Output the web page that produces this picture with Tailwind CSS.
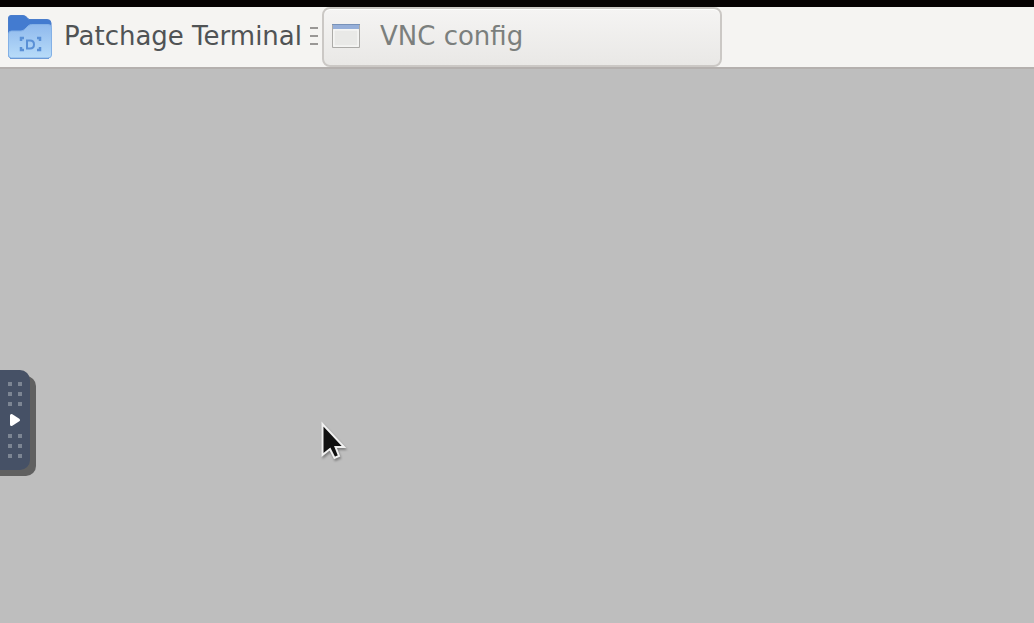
<!DOCTYPE html>
<html lang="en">
<head>
<meta charset="utf-8">
<meta name="viewport" content="width=device-width, initial-scale=1">
<title>VNC desktop</title>
<script src="https://cdn.jsdelivr.net/npm/@tailwindcss/browser@4"></script>
</head>
<body class="relative flex h-screen flex-col overflow-hidden bg-[#bebebe] font-['DejaVu_Sans',sans-serif] text-[26px] leading-8">
<header class="flex h-[69px] shrink-0 items-stretch border-t-[7px] border-b-2 border-t-[#060303] border-b-[#b4b0ae] bg-[#f5f4f2]">
  <button type="button" class="flex items-center pl-1.5 pb-0.5 text-[#505355]">
    <svg class="mr-3 h-12 w-[46px] shrink-0" viewBox="0 0 46 48" aria-hidden="true">
      <defs><linearGradient id="folder" x1="0" y1="0" x2="0" y2="1"><stop offset="0" stop-color="#8fb9ed"/><stop offset="1" stop-color="#b8dcf9"/></linearGradient></defs>
      <path d="M5 3.500H17Q19 3.500 21 5.500L23 7.500H41Q45 7.500 45 11V40Q45 46 41 46H6Q2.500 46 2.500 43V6Q2.500 3.500 5 3.500Z" fill="#437bd0" stroke="#4a7dcc"/>
      <path d="M2.500 22Q2.500 19 5.500 19H15Q17 19 19 17L22 14Q23.500 12.500 25.500 12.500H42Q45.500 12.500 45.500 15.500V43Q45.500 46 42 46H5.500Q2.500 46 2.500 43Z" fill="url(#folder)" stroke="#83b0e6"/>
      <path d="M4 46.500H43" stroke="#6b9ad6"/>
      <path d="M15 29V26H18M31 26H34V29M15 35V38H18M31 38H34V35" fill="none" stroke="#5a90d6" stroke-width="2.500"/>
      <path d="M21 28.500H24Q28 28.500 28 32.500T24 36.500H21Z" fill="none" stroke="#5a90d6" stroke-width="2"/>
    </svg>
    <span class="whitespace-nowrap">Patchage Terminal</span>
  </button>
  <svg class="ml-2 mr-1 mt-[19px] h-5 w-2 shrink-0" viewBox="0 0 8 20" aria-hidden="true"><path d="M0 2H8M0 10H8M0 18H8" stroke="#9a9896" stroke-width="2"/></svg>
  <button type="button" class="flex w-[400px] items-center rounded-lg border-2 border-[#cbc8c5] bg-linear-to-b from-[#f5f4f3] to-[#e9e8e6] pl-2 pb-0.5 text-left text-[#7b7f7d] shadow-[inset_0_1px_0_#fff]">
    <svg class="mr-5 h-[26px] w-7 shrink-0" viewBox="0 0 28 26" aria-hidden="true"><path d="M.5 1.500H27.500V24.500H.5Z" fill="#efefed" stroke="#acaba8"/><path d="M2 7H26V23H2Z" fill="#e9e9e7" stroke="#fafaf9"/><path d="M1 2H27V6H1Z" fill="#96afd9"/><path d="M0 1.500H28" stroke="#7892b9"/></svg>
    <span class="whitespace-nowrap">VNC config</span>
  </button>
</header>
<main class="relative flex-1">
  <svg class="absolute left-[318px] top-[350px] h-[46px] w-8 overflow-visible drop-shadow-[1px_2px_1px_#0005]" viewBox="0 0 32 46" aria-label="Mouse pointer"><path d="M4.500 5V36L12 30L16.500 39L21 37L17.500 28H26Z" fill="#111" stroke="#f0f0f0" stroke-width="2"/></svg>
</main>
<button type="button" aria-label="Open control bar" class="absolute left-0 top-[370px] h-[100px] w-[30px] rounded-r-[10px] bg-[#465166] shadow-[6px_6px_0_#606060,0_6px_0_#606060]">
  <svg class="h-full w-full" viewBox="0 0 30 100" aria-hidden="true">
    <path d="M8 14H12M18 14H22M8 24H12M18 24H22M8 34H12M18 34H22M8 66H12M18 66H22M8 76H12M18 76H22M8 86H12M18 86H22" stroke="#7c8593" stroke-width="4"/>
    <path d="M11.500 45.500V54.500L18.500 50Z" fill="#fff" stroke="#fff" stroke-width="3" stroke-linejoin="round"/>
  </svg>
</button>
</body>
</html>
